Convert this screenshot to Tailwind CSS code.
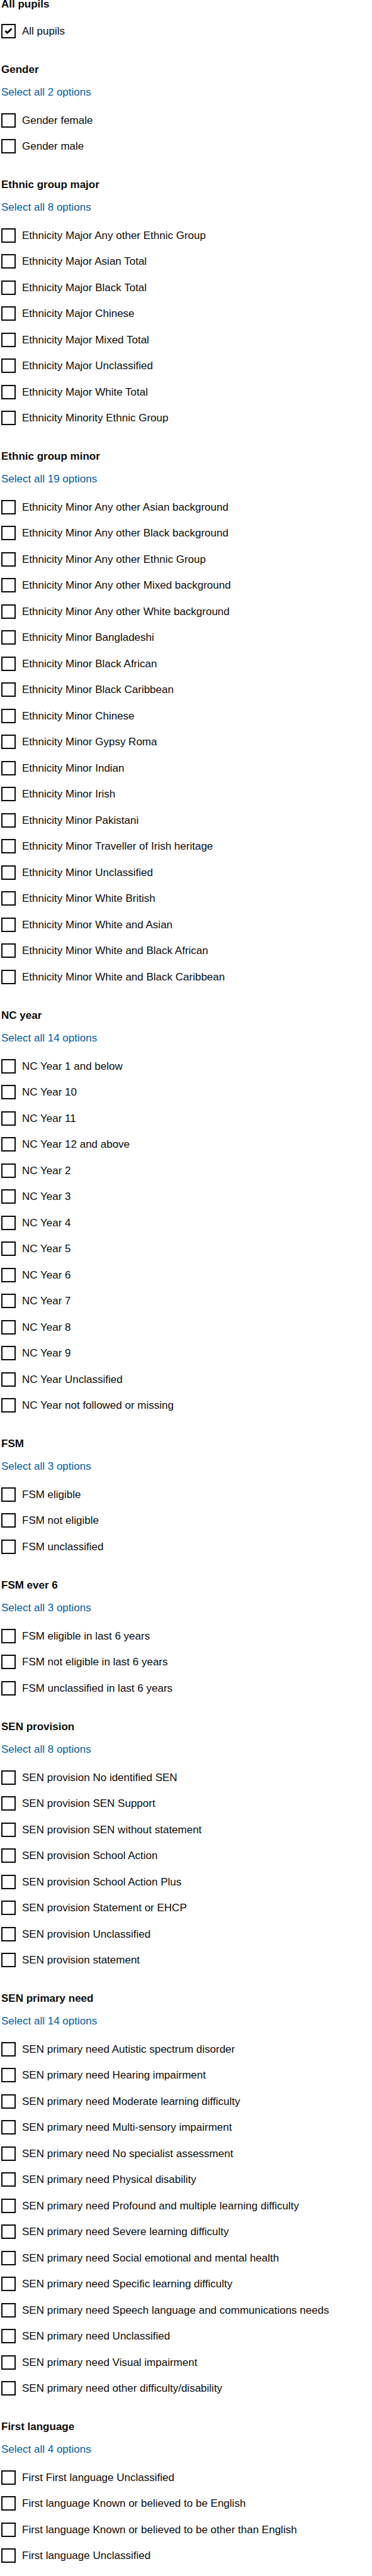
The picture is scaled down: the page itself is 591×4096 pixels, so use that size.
<!DOCTYPE html>
<html lang="en">
<head>
<meta charset="utf-8">
<meta name="viewport" content="width=device-width, initial-scale=1">
<title>Pupil characteristics</title>
<script src="https://cdn.jsdelivr.net/npm/@tailwindcss/browser@4"></script>
</head>
<body class="bg-white font-['Liberation_Sans',Arial,sans-serif] text-[17px] text-[#0b0c0c] antialiased">
<form id="filters" class="flex flex-col gap-[43px] px-0.5 pb-5"></form>

<script>
const groups = [
  ['All pupils', ['All pupils']],
  ['Gender', ['Gender female', 'Gender male']],
  ['Ethnic group major', [
    'Ethnicity Major Any other Ethnic Group', 'Ethnicity Major Asian Total', 'Ethnicity Major Black Total',
    'Ethnicity Major Chinese', 'Ethnicity Major Mixed Total', 'Ethnicity Major Unclassified',
    'Ethnicity Major White Total', 'Ethnicity Minority Ethnic Group']],
  ['Ethnic group minor', [
    'Ethnicity Minor Any other Asian background', 'Ethnicity Minor Any other Black background',
    'Ethnicity Minor Any other Ethnic Group', 'Ethnicity Minor Any other Mixed background',
    'Ethnicity Minor Any other White background', 'Ethnicity Minor Bangladeshi',
    'Ethnicity Minor Black African', 'Ethnicity Minor Black Caribbean', 'Ethnicity Minor Chinese',
    'Ethnicity Minor Gypsy Roma', 'Ethnicity Minor Indian', 'Ethnicity Minor Irish',
    'Ethnicity Minor Pakistani', 'Ethnicity Minor Traveller of Irish heritage',
    'Ethnicity Minor Unclassified', 'Ethnicity Minor White British', 'Ethnicity Minor White and Asian',
    'Ethnicity Minor White and Black African', 'Ethnicity Minor White and Black Caribbean']],
  ['NC year', [
    'NC Year 1 and below', 'NC Year 10', 'NC Year 11', 'NC Year 12 and above', 'NC Year 2', 'NC Year 3',
    'NC Year 4', 'NC Year 5', 'NC Year 6', 'NC Year 7', 'NC Year 8', 'NC Year 9',
    'NC Year Unclassified', 'NC Year not followed or missing']],
  ['FSM', ['FSM eligible', 'FSM not eligible', 'FSM unclassified']],
  ['FSM ever 6', [
    'FSM eligible in last 6 years', 'FSM not eligible in last 6 years', 'FSM unclassified in last 6 years']],
  ['SEN provision', [
    'SEN provision No identified SEN', 'SEN provision SEN Support', 'SEN provision SEN without statement',
    'SEN provision School Action', 'SEN provision School Action Plus', 'SEN provision Statement or EHCP',
    'SEN provision Unclassified', 'SEN provision statement']],
  ['SEN primary need', [
    'SEN primary need Autistic spectrum disorder', 'SEN primary need Hearing impairment',
    'SEN primary need Moderate learning difficulty', 'SEN primary need Multi-sensory impairment',
    'SEN primary need No specialist assessment', 'SEN primary need Physical disability',
    'SEN primary need Profound and multiple learning difficulty', 'SEN primary need Severe learning difficulty',
    'SEN primary need Social emotional and mental health', 'SEN primary need Specific learning difficulty',
    'SEN primary need Speech language and communications needs', 'SEN primary need Unclassified',
    'SEN primary need Visual impairment', 'SEN primary need other difficulty/disability']],
  ['First language', [
    'First First language Unclassified', 'First language Known or believed to be English',
    'First language Known or believed to be other than English', 'First language Unclassified']],
];

const option = (text, id, checked) => `
  <li class="flex items-center gap-2.5 odd:not-first:mt-px">
    <span class="relative size-[23px] shrink-0">
      <input type="checkbox" id="${id}" class="peer block size-[23px] appearance-none border-2 border-[#0b0c0c] bg-white"${checked ? ' checked' : ''}>
      <svg viewBox="0 0 23 23" aria-hidden="true" class="pointer-events-none absolute inset-0 hidden size-[23px] peer-checked:block">
        <path d="M6.4 11.1 9.6 14.3 16.6 7.5" fill="none" stroke="#0b0c0c" stroke-width="2.9"/>
      </svg>
    </span>
    <label for="${id}" class="leading-[23px]">${text}</label>
  </li>`;

document.getElementById('filters').innerHTML = groups.map(([title, options], g) => `
  <section role="group" aria-labelledby="group-${g}" class="flex flex-col items-start">
    <h2 id="group-${g}" class="font-bold leading-[14px]">${title}</h2>
    ${options.length > 1 ? `<button type="button" class="mt-[19px] -mb-px leading-5 text-[#005ea5]">Select all ${options.length} options</button>` : ''}
    <ul class="mt-6 flex flex-col gap-[18px]">${options.map((text, i) => option(text, `option-${g}-${i}`, g === 0)).join('')}</ul>
  </section>`).join('');
</script>
</body>
</html>
